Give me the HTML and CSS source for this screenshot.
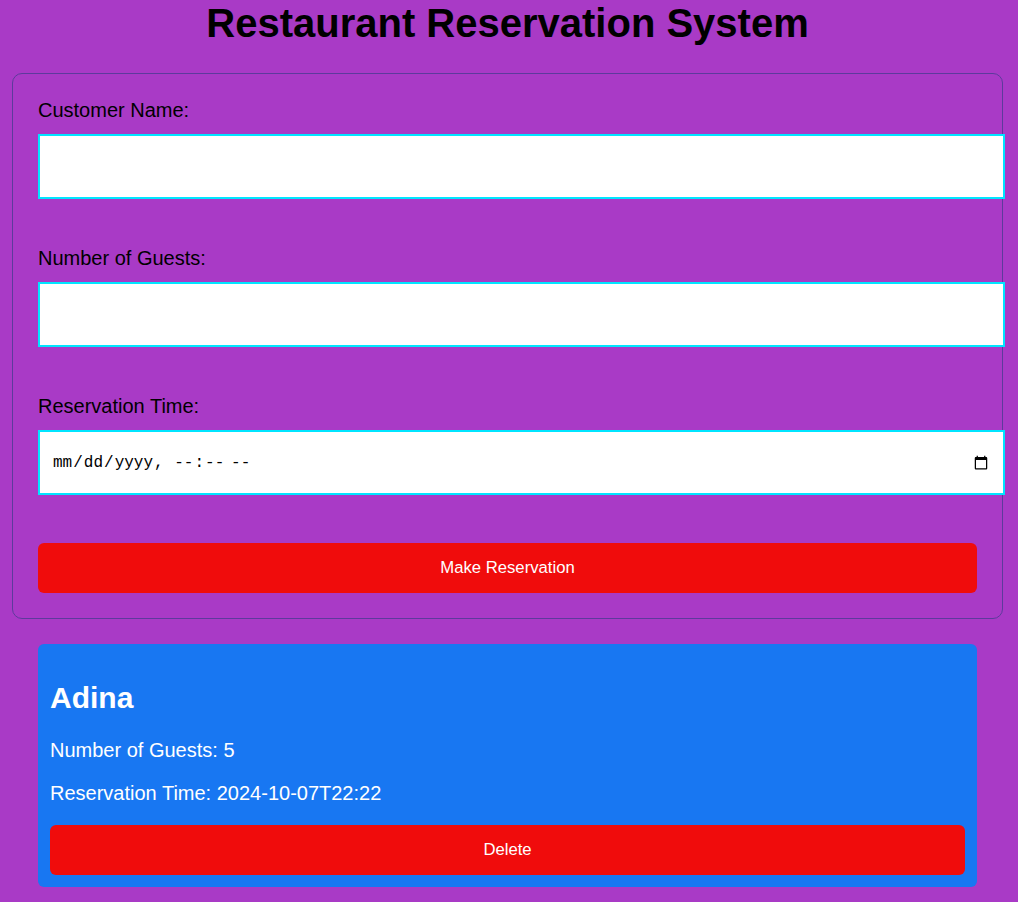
FILE: index.html
```html
<!DOCTYPE html>
<html lang="en">
<head>
<meta charset="utf-8">
<title>Restaurant Reservation System</title>
<link rel="stylesheet" href="styles.css">
</head>
<body>
<div class="page">
  <h1 class="title">Restaurant Reservation System</h1>
  <form class="res-form">
    <div class="form-group">
      <label class="form-label" for="name">Customer Name:</label>
      <input class="form-input" id="name" type="text">
    </div>
    <div class="form-group">
      <label class="form-label" for="guests">Number of Guests:</label>
      <input class="form-input" id="guests" type="number">
    </div>
    <div class="form-group">
      <label class="form-label" for="time">Reservation Time:</label>
      <input class="form-input form-input-date" id="time" type="datetime-local">
    </div>
    <button class="btn" type="button">Make Reservation</button>
  </form>
  <div class="res-list">
    <div class="res-card">
      <h2 class="res-name">Adina</h2>
      <p class="res-info">Number of Guests: 5</p>
      <p class="res-info">Reservation Time: 2024-10-07T22:22</p>
      <button class="btn" type="button">Delete</button>
    </div>
  </div>
</div>
</body>
</html>
```

FILE: styles.css
```css
html, body {
  margin: 0;
  padding: 0;
}
body {
  background: #a93ac6;
  font-family: "Liberation Sans", Arial, sans-serif;
  color: #000;
}
.page {
  width: 991px;
  margin-left: 12px;
  padding-bottom: 20px;
}
.title {
  margin: 0 0 27px;
  font-size: 40px;
  font-weight: bold;
  text-align: center;
  line-height: 46px;
}
.res-form {
  border: 1px solid #5d3a9c;
  border-radius: 10px;
  padding: 25px;
}
.form-group {
  margin-bottom: 48px;
}
.form-label {
  display: block;
  font-size: 20px;
  line-height: 23px;
  margin-bottom: 12px;
}
.form-input {
  display: block;
  box-sizing: content-box;
  width: 100%;
  height: 61px;
  padding: 0 12px;
  margin: 0;
  border: 2px solid #00e5ff;
  background: #fff;
  font-size: 16px;
  font-family: "Liberation Sans", Arial, sans-serif;
  outline: none;
}
.form-input-date {
  font-family: "Liberation Mono", "DejaVu Sans Mono", monospace;
  font-size: 16px;
  color: #000;
}
.btn {
  display: block;
  width: 100%;
  height: 50px;
  border: none;
  border-radius: 6px;
  background: #f00c0c;
  color: #fff;
  font-family: "Liberation Sans", Arial, sans-serif;
  font-size: 16.7px;
  cursor: pointer;
}
.res-list {
  margin: 25px 26px 0;
}
.res-card {
  background: #1877f2;
  border-radius: 6px;
  padding: 12px;
  color: #fff;
}
.res-name {
  margin: 24px 0 24px;
  font-size: 30px;
  line-height: 35px;
  font-weight: bold;
}
.res-info {
  margin: 0 0 20px;
  font-size: 20px;
  line-height: 23px;
}
```
